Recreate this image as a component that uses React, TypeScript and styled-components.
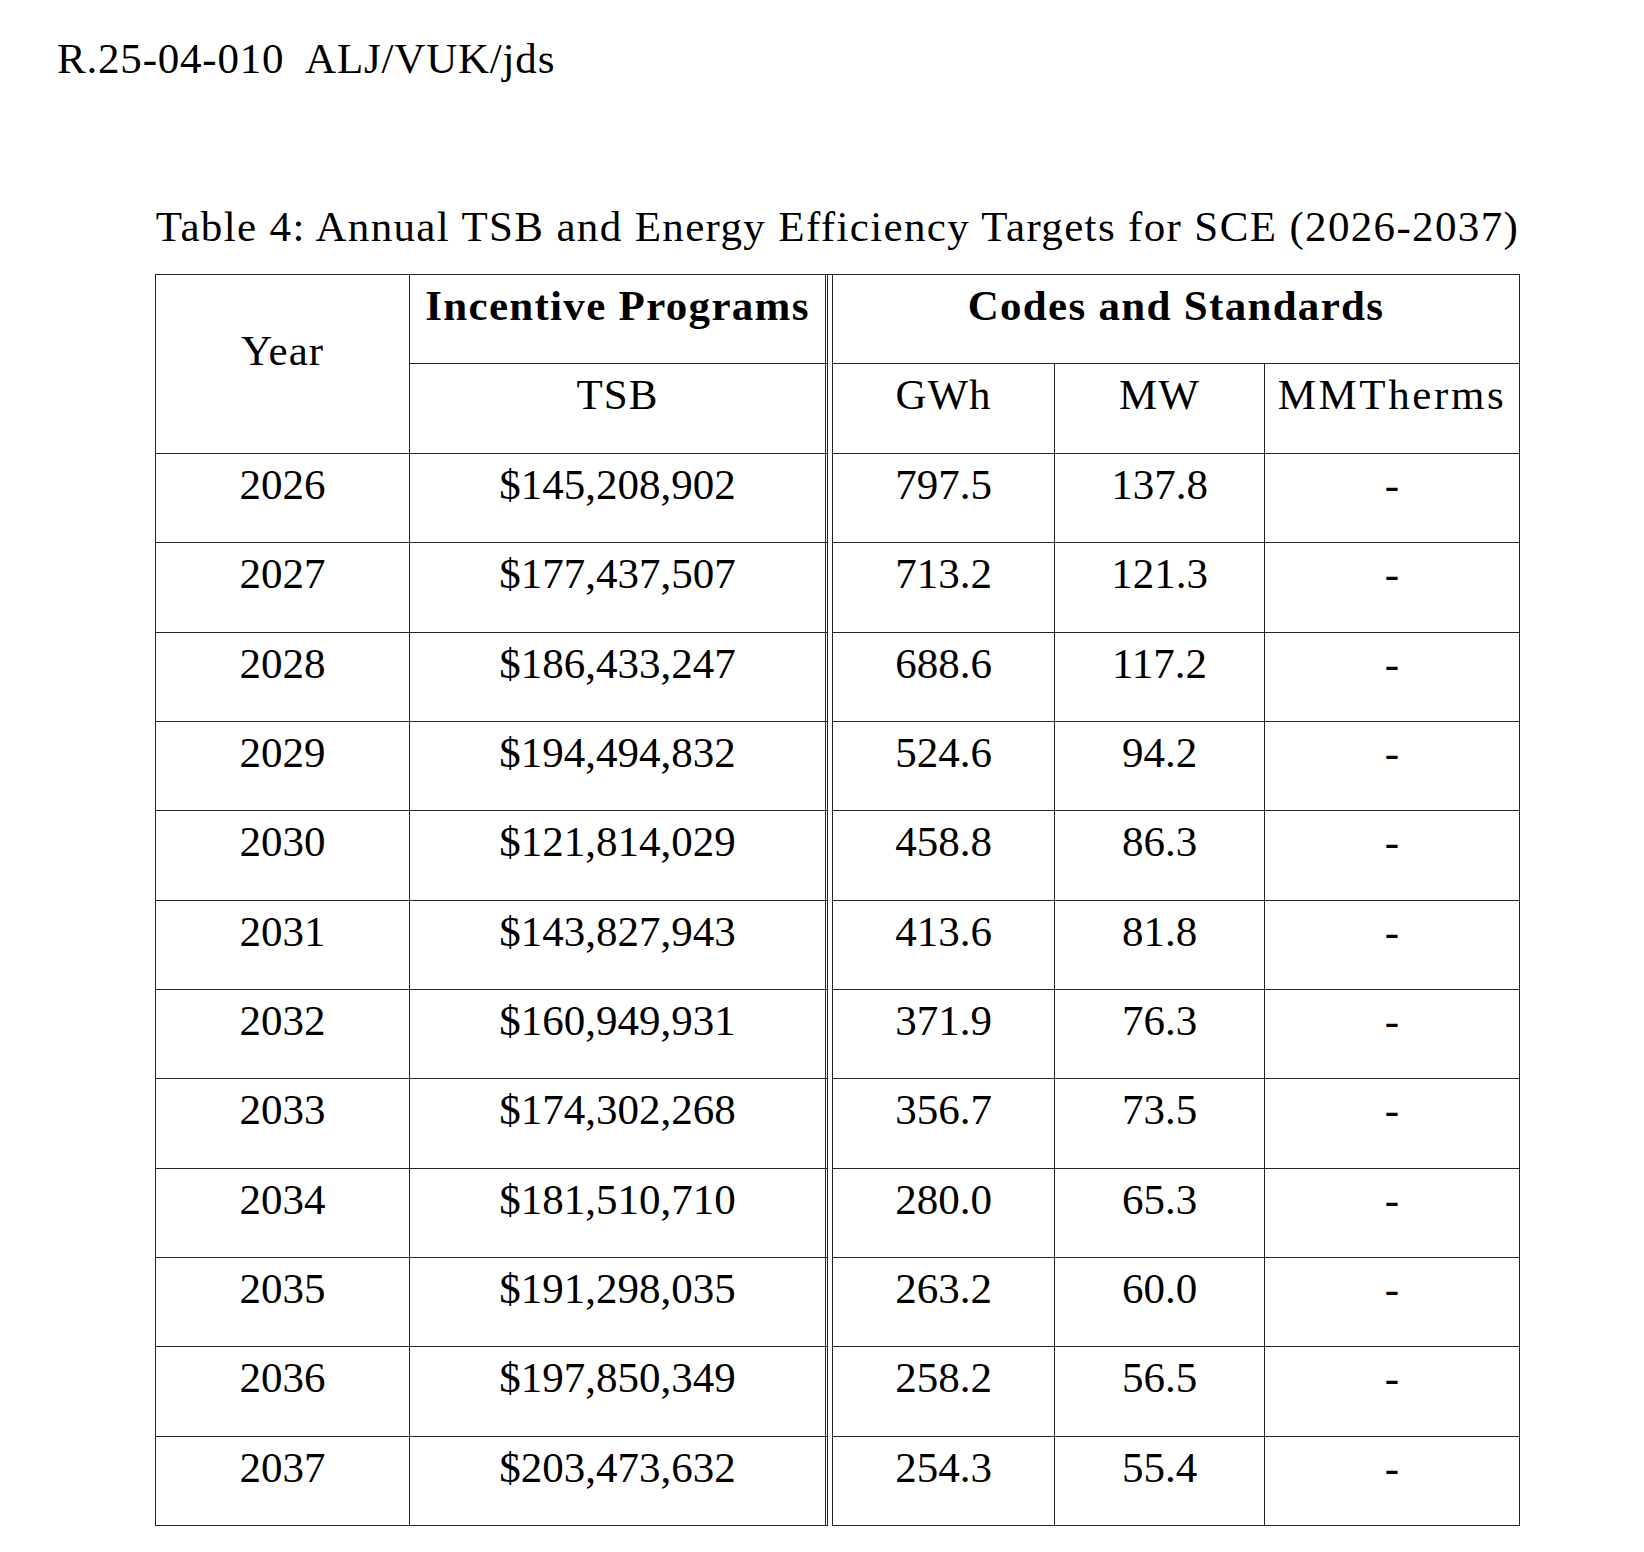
import React from "react";
import styled, { createGlobalStyle } from "styled-components";

const GlobalStyle = createGlobalStyle`
  html, body {
    margin: 0;
    padding: 0;
    background: #ffffff;
  }
  body {
    font-family: "Liberation Serif", "Times New Roman", serif;
    color: #000000;
  }
  * { box-sizing: border-box; }
`;

const Page = styled.div`
  width: 1644px;
  min-height: 1552px;
  padding-top: 34px;
  background: #ffffff;
`;

const DocRef = styled.div`
  margin-left: 57px;
  font-size: 43px;
  line-height: 50px;
  letter-spacing: 0.8px;
  white-space: pre;
`;

const Figure = styled.section`
  margin-left: 155px;
  width: 1365px;
  margin-top: 118px;
`;

const Caption = styled.div`
  text-align: center;
  font-size: 43px;
  line-height: 50px;
  letter-spacing: 1.35px;
  white-space: nowrap;
  margin-bottom: 22px;
`;

const LINE = "#242424";

const Grid = styled.div`
  display: grid;
  grid-template-columns: 254px 418px 227px 210px 255px;
  grid-template-rows: 89px 90px repeat(12, 89.333px);
  border-top: 1px solid ${LINE};
  border-left: 1px solid ${LINE};
`;

interface CellProps {
  $col: string;
  $row?: string;
  $pad?: number;
  $bold?: boolean;
  $double?: boolean;
  $gap?: boolean;
  $spacing?: number;
}

const Cell = styled.div<CellProps>`
  grid-column: ${(p) => p.$col};
  grid-row: ${(p) => p.$row ?? "auto"};
  border-bottom: 1px solid ${LINE};
  border-right: ${(p) => (p.$double ? `3px double ${LINE}` : `1px solid ${LINE}`)};
  border-left: ${(p) => (p.$gap ? `1px solid ${LINE}` : "none")};
  margin-left: ${(p) => (p.$gap ? "4px" : "0")};
  padding-top: ${(p) => p.$pad ?? 6}px;
  text-align: center;
  font-size: 43px;
  line-height: 50px;
  font-weight: ${(p) => (p.$bold ? 700 : 400)};
  letter-spacing: ${(p) => p.$spacing ?? 0}px;
  white-space: nowrap;
`;

const rows: [string, string, string, string, string][] = [
  ["2026", "$145,208,902", "797.5", "137.8", "-"],
  ["2027", "$177,437,507", "713.2", "121.3", "-"],
  ["2028", "$186,433,247", "688.6", "117.2", "-"],
  ["2029", "$194,494,832", "524.6", "94.2", "-"],
  ["2030", "$121,814,029", "458.8", "86.3", "-"],
  ["2031", "$143,827,943", "413.6", "81.8", "-"],
  ["2032", "$160,949,931", "371.9", "76.3", "-"],
  ["2033", "$174,302,268", "356.7", "73.5", "-"],
  ["2034", "$181,510,710", "280.0", "65.3", "-"],
  ["2035", "$191,298,035", "263.2", "60.0", "-"],
  ["2036", "$197,850,349", "258.2", "56.5", "-"],
  ["2037", "$203,473,632", "254.3", "55.4", "-"],
];

export default function App() {
  return (
    <>
      <GlobalStyle />
      <Page>
        <DocRef>{"R.25-04-010  ALJ/VUK/jds"}</DocRef>
        <Figure>
          <Caption>Table 4: Annual TSB and Energy Efficiency Targets for SCE (2026-2037)</Caption>
          <Grid>
            <Cell $col="1" $row="1 / span 2" $pad={51} $spacing={1}>
              Year
            </Cell>
            <Cell $col="2" $row="1" $bold $double $spacing={1.3}>
              Incentive Programs
            </Cell>
            <Cell $col="3 / span 3" $row="1" $bold $gap $spacing={1.3}>
              Codes and Standards
            </Cell>
            <Cell $col="2" $row="2" $double $spacing={1}>
              TSB
            </Cell>
            <Cell $col="3" $row="2" $gap $spacing={1}>
              GWh
            </Cell>
            <Cell $col="4" $row="2" $spacing={1}>
              MW
            </Cell>
            <Cell $col="5" $row="2" $spacing={2.6}>
              MMTherms
            </Cell>
            {rows.map((r) => (
              <React.Fragment key={r[0]}>
                <Cell $col="1">{r[0]}</Cell>
                <Cell $col="2" $double>
                  {r[1]}
                </Cell>
                <Cell $col="3" $gap>
                  {r[2]}
                </Cell>
                <Cell $col="4">{r[3]}</Cell>
                <Cell $col="5">{r[4]}</Cell>
              </React.Fragment>
            ))}
          </Grid>
        </Figure>
      </Page>
    </>
  );
}
